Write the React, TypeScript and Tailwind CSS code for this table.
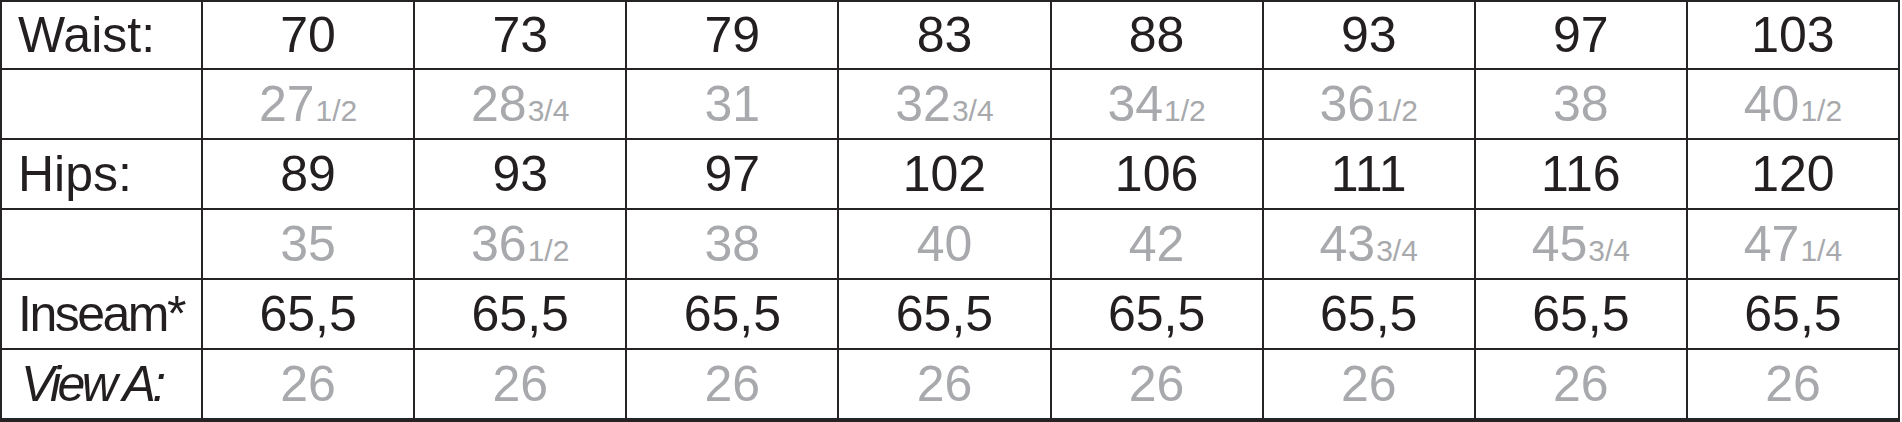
const rows: { label: string; italic?: boolean; tight?: boolean; gray?: boolean; values: [string, string?][] }[] = [
  {
    label: "Waist:",
    values: [["70"], ["73"], ["79"], ["83"], ["88"], ["93"], ["97"], ["103"]],
  },
  {
    label: "",
    gray: true,
    values: [["27", "1/2"], ["28", "3/4"], ["31"], ["32", "3/4"], ["34", "1/2"], ["36", "1/2"], ["38"], ["40", "1/2"]],
  },
  {
    label: "Hips:",
    values: [["89"], ["93"], ["97"], ["102"], ["106"], ["111"], ["116"], ["120"]],
  },
  {
    label: "",
    gray: true,
    values: [["35"], ["36", "1/2"], ["38"], ["40"], ["42"], ["43", "3/4"], ["45", "3/4"], ["47", "1/4"]],
  },
  {
    label: "Inseam*",
    tight: true,
    values: [["65,5"], ["65,5"], ["65,5"], ["65,5"], ["65,5"], ["65,5"], ["65,5"], ["65,5"]],
  },
  {
    label: "View A:",
    italic: true,
    gray: true,
    values: [["26"], ["26"], ["26"], ["26"], ["26"], ["26"], ["26"], ["26"]],
  },
];

const rowHeight = (i: number) =>
  i === 0 ? "h-[68px]" : i === rows.length - 1 ? "h-[72px] border-b-4" : "h-[70px]";

export default function App() {
  return (
    <div className="bg-white w-[1902px] h-[422px] font-['Liberation_Sans',Arial,sans-serif] text-[50px] leading-none">
      <div className="w-[1900px] border-t-2 border-l-2 border-[#262324] grid grid-cols-[201px_repeat(8,1fr)]">
        {rows.map((row, i) => (
          <div key={i} className="contents">
            {/* label column */}
            <div
              className={`${rowHeight(i)} border-r-2 border-b-2 border-[#262324] flex items-center pl-4 text-[#231f20] ${
                row.italic ? "italic tracking-[-3.5px] pl-[19px]" : ""
              } ${row.tight ? "tracking-[-2.5px]" : ""}`}
            >
              {row.italic ? (
                <span>
                  View<span className="tracking-[-6px]"> </span>A:
                </span>
              ) : (
                row.label
              )}
            </div>
            {row.values.map(([whole, frac], j) => (
              <div
                key={j}
                className={`${rowHeight(i)} border-r-2 border-b-2 border-[#262324] flex items-center justify-center ${
                  row.gray ? "text-[#a7a9ac]" : "text-[#231f20]"
                }`}
              >
                <span className="flex items-baseline">
                  <span>{whole}</span>
                  {frac && <span className="text-[30px] ml-[1px]">{frac}</span>}
                </span>
              </div>
            ))}
          </div>
        ))}
      </div>
    </div>
  );
}
